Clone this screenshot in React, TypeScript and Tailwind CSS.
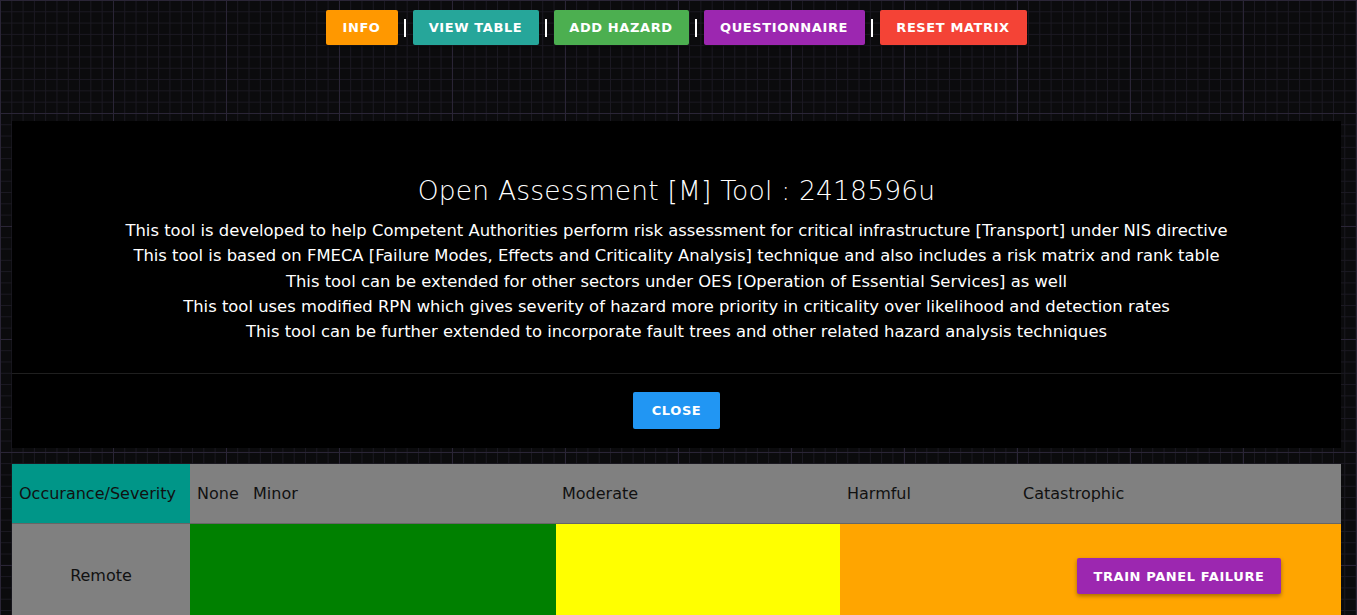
import React from "react";

const navButtons = [
  { label: "INFO", className: "bg-[#ff9800] w-[72px]" },
  { label: "VIEW TABLE", className: "bg-[#26a69a] w-[126px]" },
  { label: "ADD HAZARD", className: "bg-[#4caf50] w-[135px]" },
  { label: "QUESTIONNAIRE", className: "bg-[#9c27b0] w-[161px]" },
  { label: "RESET MATRIX", className: "bg-[#f44336] w-[147px]" },
];

const infoLines = [
  "This tool is developed to help Competent Authorities perform risk assessment for critical infrastructure [Transport] under NIS directive",
  "This tool is based on FMECA [Failure Modes, Effects and Criticality Analysis] technique and also includes a risk matrix and rank table",
  "This tool can be extended for other sectors under OES [Operation of Essential Services] as well",
  "This tool uses modified RPN which gives severity of hazard more priority in criticality over likelihood and detection rates",
  "This tool can be further extended to incorporate fault trees and other related hazard analysis techniques",
];

const App = () => {
  return (
    <div className="min-h-[615px] w-full overflow-hidden bg-[#0b0b0d] bg-[linear-gradient(to_right,#2a2536_1px,transparent_1px),linear-gradient(to_bottom,#2a2536_1px,transparent_1px),linear-gradient(to_right,#1b1922_1px,transparent_1px),linear-gradient(to_bottom,#1b1922_1px,transparent_1px)] bg-[size:113px_113px,113px_113px,11.3px_11.3px,11.3px_11.3px] font-['DejaVu_Sans',sans-serif]">
      {/* Top nav */}
      <nav className="flex items-center justify-center pt-[10px] pr-[5px]">
        {navButtons.map((b, i) => (
          <React.Fragment key={b.label}>
            {i > 0 && (
              <span className="flex w-[15px] justify-center">
                <span className="h-[18px] w-[2px] bg-white" />
              </span>
            )}
            <button
              className={`${b.className} h-[35px] rounded-[2px] text-[13px] font-bold tracking-[0.6px] text-white shadow-[0_2px_2px_rgba(0,0,0,0.3)]`}
            >
              {b.label}
            </button>
          </React.Fragment>
        ))}
      </nav>

      {/* Info panel */}
      <section className="mt-[76px] ml-[12px] w-[1329px] bg-black text-white">
        <div className="flex flex-col items-center pt-[52px] pb-[29px]">
          <h1 className="text-[26.5px] leading-[36px] tracking-[0.2px] font-light">
            Open Assessment [M] Tool : 2418596u
          </h1>
          <div className="mt-[9px] flex flex-col items-center text-[16.4px] leading-[25.3px]">
            {infoLines.map((l) => (
              <p key={l}>{l}</p>
            ))}
          </div>
        </div>
        <div className="h-px bg-[#1f1f1f]" />
        <div className="flex justify-center pt-[18px] pb-[19px]">
          <button className="h-[37px] w-[87px] rounded-[2px] bg-[#2196f3] text-[13px] font-bold tracking-[0.6px] text-white">
            CLOSE
          </button>
        </div>
      </section>

      {/* Risk matrix */}
      <section className="mt-[16px] ml-[12px] w-[1329px] text-[16px] text-[#111]">
        <div className="flex h-[59px] bg-[#808080]">
          <div className="flex w-[178px] items-center bg-[#009688] pl-[7px]">Occurance/Severity</div>
          <div className="flex w-[56px] items-center pl-[7px]">None</div>
          <div className="flex w-[310px] items-center pl-[7px]">Minor</div>
          <div className="flex w-[284px] items-center pl-[6px]">Moderate</div>
          <div className="flex w-[177px] items-center pl-[7px]">Harmful</div>
          <div className="flex flex-1 items-center pl-[6px]">Catastrophic</div>
        </div>
        <div className="flex h-[104px] border-t border-[#666]">
          <div className="flex w-[178px] items-center justify-center bg-[#808080]">Remote</div>
          <div className="w-[366px] bg-[#008000]" />
          <div className="w-[284px] bg-[#ffff00]" />
          <div className="flex flex-1 items-start justify-end bg-[#ffa500] pt-[34px] pr-[60px]">
            <button className="h-[36px] w-[204px] rounded-[2px] bg-[#9c27b0] text-[13px] font-bold tracking-[0.6px] text-white shadow-[0_2px_4px_rgba(0,0,0,0.35)]">
              TRAIN PANEL FAILURE
            </button>
          </div>
        </div>
      </section>
    </div>
  );
};

export default App;
